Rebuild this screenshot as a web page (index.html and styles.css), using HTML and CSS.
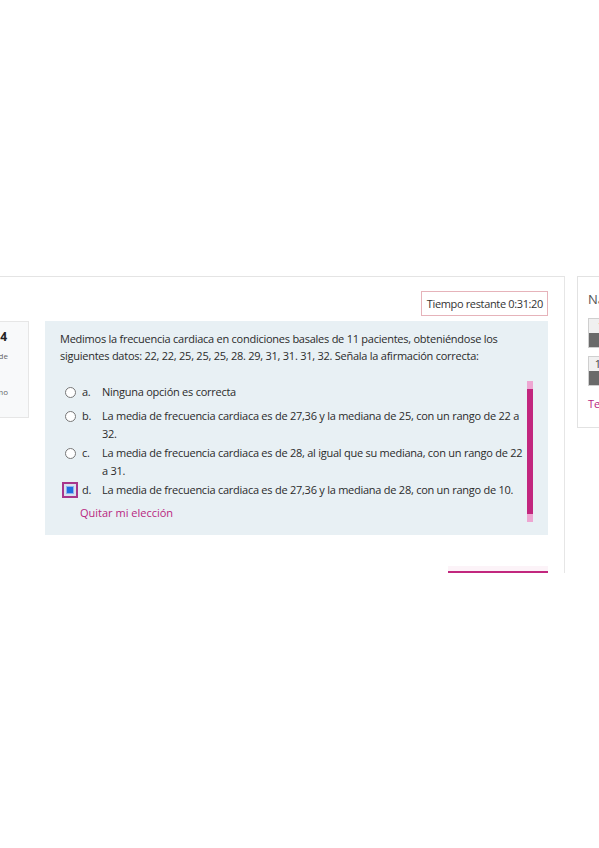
FILE: index.html
```html
<!DOCTYPE html>
<html lang="es">
<head>
  <meta charset="UTF-8" />
  <meta name="viewport" content="width=device-width, initial-scale=1.0"/>
  <title>Cuestionario</title>
  <link rel="stylesheet" href="styles.css">
</head>
<body>
  <div class="page">
    <div class="main">
      <div class="timer-row">
        <div class="timer">Tiempo restante 0:31:20</div>
      </div>

      <div class="question-row">
        <div class="info">
          <div class="info-inner">
            <div class="qno">Pregunta 14</div>
            <div class="state">Sin respuesta de</div>
            <div class="state score">Puntúa como</div>
          </div>
        </div>

        <div class="question">
          <p class="qtext">Medimos la frecuencia cardiaca en condiciones basales de 11 pacientes, obteniéndose los siguientes datos: 22, 22, 25, 25, 25, 28. 29, 31, 31. 31, 32. Señala la afirmación correcta:</p>

          <div class="answers">
            <div class="answer-list">
              <div class="opt first">
                <span class="radio"></span>
                <span class="letter">a.</span>
                <span class="opt-text">Ninguna opción es correcta</span>
              </div>
              <div class="opt">
                <span class="radio"></span>
                <span class="letter">b.</span>
                <span class="opt-text">La media de frecuencia cardiaca es de 27,36 y la mediana de 25, con un rango de 22 a 32.</span>
              </div>
              <div class="opt">
                <span class="radio"></span>
                <span class="letter">c.</span>
                <span class="opt-text">La media de frecuencia cardiaca es de 28, al igual que su mediana, con un rango de 22 a 31.</span>
              </div>
              <div class="opt selected">
                <span class="radio-focus"><span class="dot"></span></span>
                <span class="letter">d.</span>
                <span class="opt-text">La media de frecuencia cardiaca es de 27,36 y la mediana de 28, con un rango de 10.</span>
              </div>
              <a class="clear" href="#">Quitar mi elección</a>
            </div>
            <div class="scrollbar">
              <span class="arrow"></span>
              <span class="thumb"></span>
              <span class="arrow"></span>
            </div>
          </div>
        </div>
      </div>

      <div class="nav-row">
        <div class="next-btn"></div>
      </div>
    </div>

    <div class="side">
      <div class="side-card">
        <div class="side-title">Navegación</div>
        <div class="nav-btn"><span class="num">1</span><span class="bar"></span></div>
        <div class="nav-btn"><span class="num">13</span><span class="bar"></span></div>
        <a class="finish" href="#">Terminar intento...</a>
      </div>
    </div>
  </div>
</body>
</html>
```

FILE: styles.css
```css
body {
  margin: 0;
  background: #fff;
  font-family: 'Open Sans', 'Noto Sans', sans-serif;
  color: #2b2b2b;
  overflow: hidden;
}
.page {
  display: flex;
  padding-top: 276px;
  width: 720px;
}
.main {
  width: 564px;
  height: 296px;
  border-top: 1px solid #e4e4e4;
  border-right: 1px solid #e6e6e6;
  overflow: hidden;
  flex-shrink: 0;
}
.timer-row {
  display: flex;
  justify-content: flex-end;
  padding: 14px 16px 0 0;
}
.timer {
  border: 1px solid #e6b3ba;
  font-size: 11px;
  line-height: 23px;
  padding: 0 4px 0 5px;
  color: #333;
  letter-spacing: -0.35px;
}
.question-row {
  display: flex;
  margin-top: 5px;
}
.info {
  width: 28px;
  height: 95px;
  overflow: hidden;
  background: #f8f9fa;
  border: 1px solid #e6e6e6;
  border-left: none;
  flex-shrink: 0;
}
.info-inner {
  width: 120px;
  margin-left: -92px;
  text-align: right;
  padding-top: 7px;
}
.qno {
  font-size: 12px;
  font-weight: bold;
  color: #222;
  line-height: 16px;
  margin-right: 21px;
}
.state {
  font-size: 8px;
  color: #666;
  line-height: 15px;
  margin-right: 20px;
  margin-top: 3px;
}
.state.score {
  margin-top: 21px;
}
.question {
  width: 488px;
  margin-left: 16px;
  background: #e8f0f4;
  padding: 9px 0 13px 15px;
  height: 192px;
}
.qtext {
  margin: 0;
  font-size: 11px;
  line-height: 17px;
  width: 450px;
  letter-spacing: -0.25px;
}
.answers {
  display: flex;
  margin-top: 17px;
}
.answer-list {
  width: 467px;
}
.opt {
  display: flex;
  align-items: flex-start;
  font-size: 11px;
  line-height: 18px;
  padding-bottom: 1px;
  letter-spacing: -0.25px;
}
.opt.first {
  padding-top: 2px;
  padding-bottom: 6px;
}
.radio {
  width: 9px;
  height: 9px;
  border: 1px solid #777;
  border-radius: 50%;
  background: #fff;
  margin: 4px 0 0 5px;
  flex-shrink: 0;
}
.radio-focus {
  width: 12px;
  height: 12px;
  border: 2px solid #a8368c;
  background: #d9e2ee;
  margin: 1px 0 0 2px;
  display: flex;
  align-items: center;
  justify-content: center;
  flex-shrink: 0;
}
.dot {
  width: 6px;
  height: 6px;
  background: #1f6fe0;
  border: 1px solid #8fb4f0;
}
.letter {
  width: 20px;
  margin-left: 6px;
  flex-shrink: 0;
}
.selected .letter {
  margin-left: 4px;
}
.opt-text {
  flex: 1;
}
.clear {
  display: block;
  margin: 4px 0 0 20px;
  font-size: 11px;
  line-height: 18px;
  color: #b8267f;
  text-decoration: none;
}
.scrollbar {
  display: flex;
  flex-direction: column;
  width: 6px;
  height: 141px;
}
.arrow {
  height: 8px;
  background: #eea6d2;
}
.thumb {
  flex: 1;
  background: #c2277e;
}
.nav-row {
  display: flex;
  justify-content: flex-end;
  padding: 31px 16px 0 0;
}
.next-btn {
  width: 100px;
  height: 5px;
  background: #fcf3f8;
  border-bottom: 2px solid #c2277e;
}
.side {
  padding-left: 12px;
}
.side-card {
  width: 200px;
  height: 152px;
  border: 1px solid #e2e2e2;
  padding: 13px 0 0 10px;
  box-sizing: border-box;
}
.side-title {
  font-size: 13px;
  color: #555;
  line-height: 18px;
}
.nav-btn {
  width: 24px;
  margin-top: 10px;
  border: 1px solid #cfcfcf;
  display: flex;
  flex-direction: column;
}
.nav-btn + .nav-btn {
  margin-top: 8px;
}
.num {
  font-size: 11px;
  line-height: 14px;
  background: #f0f0f0;
  text-align: center;
  color: #444;
}
.bar {
  height: 14px;
  background: #6a6a6a;
}
.finish {
  display: block;
  margin-top: 10px;
  font-size: 11px;
  color: #b8267f;
  text-decoration: none;
}
```
